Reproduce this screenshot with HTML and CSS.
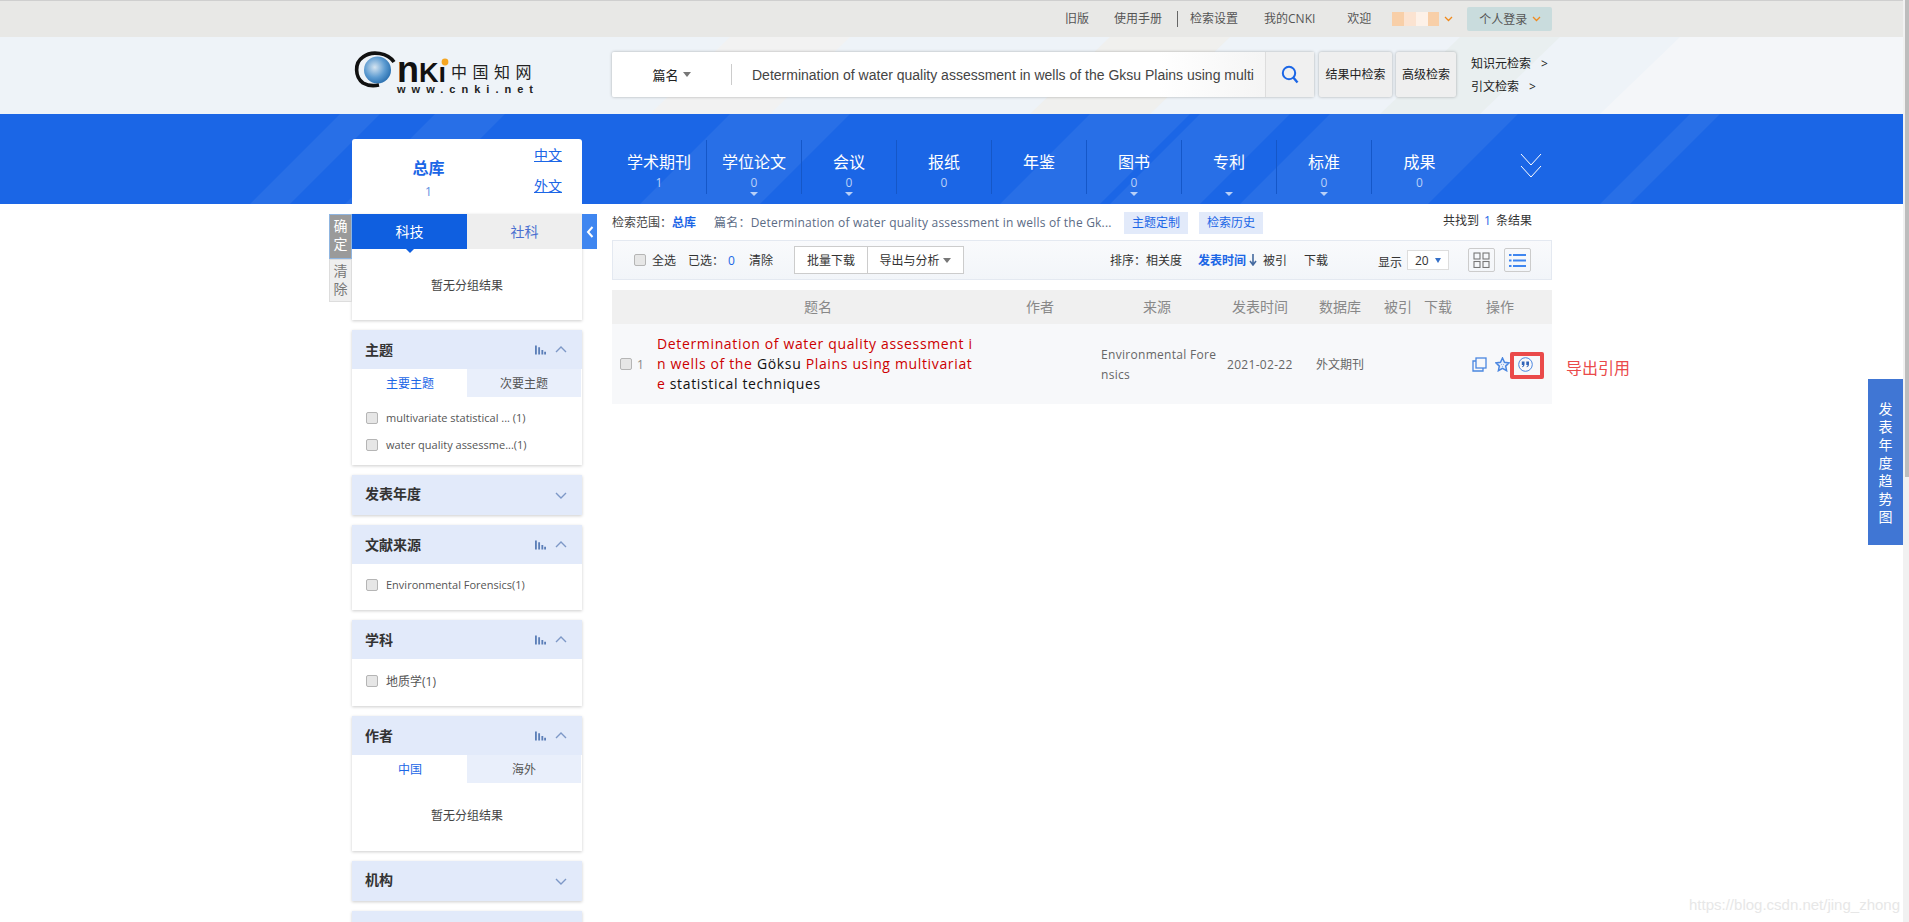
FILE: index.html
```html
<!DOCTYPE html>
<html lang="zh-CN">
<head>
  <meta charset="UTF-8">
  <title>检索结果 - 中国知网</title>
  <link rel="stylesheet" href="styles.css">
</head>
<body>
<div class="page">
  <div class="topbar">
    <div class="wrap topbar-in">
      <a class="top-link">旧版</a>
      <a class="top-link top-manual">使用手册</a>
      <span class="top-sep"></span>
      <a class="top-link top-setting">检索设置</a>
      <a class="top-link top-my">我的CNKI</a>
      <a class="top-link top-hello">欢迎</a>
      <span class="blur-name"><i></i><i></i><i></i><i></i></span>
      <svg class="mini-chev" width="9" height="6" viewBox="0 0 9 6"><path d="M1 1l3.5 3.5L8 1" fill="none" stroke="#f08a1d" stroke-width="1.3"/></svg>
      <div class="login">个人登录
        <svg class="mini-chev-in" width="9" height="6" viewBox="0 0 9 6"><path d="M1 1l3.5 3.5L8 1" fill="none" stroke="#f08a1d" stroke-width="1.3"/></svg>
      </div>
    </div>
  </div>

  <header class="head">
    <svg class="decor" width="1904" height="77" viewBox="0 0 1904 77">
      <polygon points="650,77 730,0 850,0 770,77" fill="#f2f2f2"/>
      <polygon points="1030,77 1110,0 1230,0 1150,77" fill="#f0f0ee"/>
      <polygon points="1380,77 1460,0 1560,0 1480,77" fill="#e9eff0"/>
      <polygon points="1600,77 1680,0 1904,0 1904,77" fill="#f4f6f9"/>
    </svg>
    <div class="wrap head-in">
      <svg class="logo" width="190" height="50" viewBox="0 0 190 50">
        <defs>
          <radialGradient id="globe" cx="0.4" cy="0.4" r="0.7">
            <stop offset="0" stop-color="#d5e4f0"/>
            <stop offset="0.55" stop-color="#5c9bd1"/>
            <stop offset="1" stop-color="#1f66a8"/>
          </radialGradient>
        </defs>
        <circle cx="25.500" cy="21" r="13.500" fill="url(#globe)"/>
        <path d="M42 13C36 4 20 1 11 8 2 14 3 28 11 34c5 3 11 3 16 2" fill="none" stroke="#111" stroke-width="3.600"/>
        <text class="logo-n" x="45" y="33">n</text>
        <text class="logo-k" x="67" y="33">Kı</text>
        <circle cx="93" cy="13" r="3.400" fill="#f5a623"/>
        <text class="logo-cn" x="99" y="29">中国知网</text>
        <text class="logo-url" x="45" y="44" textLength="136">www.cnki.net</text>
      </svg>

      <div class="search">
        <div class="search-type">篇名<i class="tri-down"></i></div>
        <div class="search-text">Determination of water quality assessment in wells of the Gksu Plains using multi</div>
        <div class="search-btn">
          <svg width="18" height="20" viewBox="0 0 18 20"><circle cx="8" cy="8" r="6.200" fill="none" stroke="#1b66e6" stroke-width="2"/><path d="M12.500 12.800L16.500 17.500" stroke="#1b66e6" stroke-width="2.400"/></svg>
        </div>
      </div>
      <div class="head-btn head-btn-a">结果中检索</div>
      <div class="head-btn head-btn-b">高级检索</div>
      <div class="head-links">
        <a>知识元检索<span class="gt">&gt;</span></a>
        <a>引文检索<span class="gt">&gt;</span></a>
      </div>
    </div>
  </header>

  <div class="band">
    <svg class="decor" width="1904" height="90" viewBox="0 0 1904 90">
      <g fill="#fff" fill-opacity="0.06">
        <polygon points="250,90 340,0 380,0 290,90"/>
        <polygon points="345,90 435,0 505,0 415,90"/>
        <polygon points="640,90 730,0 850,0 760,90"/>
        <circle cx="845" cy="180" r="66"/>
        <polygon points="1000,90 1090,0 1190,0 1100,90"/>
        <polygon points="1110,90 1200,0 1290,0 1200,90"/>
        <polygon points="1240,90 1330,0 1518,0 1428,90"/>
        <polygon points="1600,90 1690,0 1720,0 1630,90"/>
      </g>
    </svg>
    <div class="wrap band-in">
      <div class="db-main">
        <div class="db-total">
          <strong>总库</strong>
          <span>1</span>
        </div>
        <div class="db-lang">
          <a>中文</a>
          <a>外文</a>
        </div>
      </div>
      <nav class="db-nav">
        <div class="db-item"><b>学术期刊</b><span>1</span></div>
        <div class="db-item"><b>学位论文</b><span>0</span><i class="db-tri"></i></div>
        <div class="db-item"><b>会议</b><span>0</span><i class="db-tri"></i></div>
        <div class="db-item"><b>报纸</b><span>0</span></div>
        <div class="db-item"><b>年鉴</b></div>
        <div class="db-item"><b>图书</b><span>0</span><i class="db-tri"></i></div>
        <div class="db-item"><b>专利</b><i class="db-tri"></i></div>
        <div class="db-item"><b>标准</b><span>0</span><i class="db-tri"></i></div>
        <div class="db-item db-last"><b>成果</b><span>0</span></div>
      </nav>
      <svg class="db-more" width="24" height="26" viewBox="0 0 24 26"><path d="M2 1l10 11L22 1M2 13l10 11 10-11" fill="none" stroke="#fff" stroke-width="1"/></svg>
    </div>
  </div>

  <div class="wrap content">
    <aside class="side">
      <div class="side-actions">
        <div class="act act-ok">确定</div>
        <div class="act act-clear">清除</div>
      </div>
      <div class="side-toggle">
        <svg width="8" height="12" viewBox="0 0 8 12"><path d="M6.500 1L2 6l4.500 5" fill="none" stroke="#fff" stroke-width="2"/></svg>
      </div>

      <section class="card">
        <div class="big-tabs">
          <div class="big-tab on">科技</div>
          <div class="big-tab">社科</div>
        </div>
        <div class="empty empty-first">暂无分组结果</div>
      </section>

      <section class="card">
        <div class="g-head">
          <h3>主题</h3>
          <svg class="bars" width="11" height="10" viewBox="0 0 12 10"><path d="M0 0h2v10H0zM3.500 2h2v8h-2zM7 5h2v5H7zM10 7h2v3h-2z" fill="#5c7fb8"/></svg>
          <svg class="chev" width="12" height="7" viewBox="0 0 12 7"><path d="M1 6l5-5 5 5" fill="none" stroke="#7d98c7" stroke-width="1.400"/></svg>
        </div>
        <div class="g-tabs">
          <div class="g-tab on">主要主题</div>
          <div class="g-tab">次要主题</div>
        </div>
        <ul class="g-list">
          <li><input class="cb" type="checkbox">multivariate statistical ... (1)</li>
          <li><input class="cb" type="checkbox">water quality assessme...(1)</li>
        </ul>
      </section>

      <section class="card">
        <div class="g-head g-closed">
          <h3>发表年度</h3>
          <svg class="chev" width="12" height="7" viewBox="0 0 12 7"><path d="M1 1l5 5 5-5" fill="none" stroke="#7d98c7" stroke-width="1.400"/></svg>
        </div>
      </section>

      <section class="card">
        <div class="g-head">
          <h3>文献来源</h3>
          <svg class="bars" width="11" height="10" viewBox="0 0 12 10"><path d="M0 0h2v10H0zM3.500 2h2v8h-2zM7 5h2v5H7zM10 7h2v3h-2z" fill="#5c7fb8"/></svg>
          <svg class="chev" width="12" height="7" viewBox="0 0 12 7"><path d="M1 6l5-5 5 5" fill="none" stroke="#7d98c7" stroke-width="1.400"/></svg>
        </div>
        <ul class="g-list g-list-one">
          <li><input class="cb" type="checkbox">Environmental Forensics(1)</li>
        </ul>
      </section>

      <section class="card">
        <div class="g-head">
          <h3>学科</h3>
          <svg class="bars" width="11" height="10" viewBox="0 0 12 10"><path d="M0 0h2v10H0zM3.500 2h2v8h-2zM7 5h2v5H7zM10 7h2v3h-2z" fill="#5c7fb8"/></svg>
          <svg class="chev" width="12" height="7" viewBox="0 0 12 7"><path d="M1 6l5-5 5 5" fill="none" stroke="#7d98c7" stroke-width="1.400"/></svg>
        </div>
        <ul class="g-list g-list-two">
          <li><input class="cb" type="checkbox">地质学(1)</li>
        </ul>
      </section>

      <section class="card">
        <div class="g-head">
          <h3>作者</h3>
          <svg class="bars" width="11" height="10" viewBox="0 0 12 10"><path d="M0 0h2v10H0zM3.500 2h2v8h-2zM7 5h2v5H7zM10 7h2v3h-2z" fill="#5c7fb8"/></svg>
          <svg class="chev" width="12" height="7" viewBox="0 0 12 7"><path d="M1 6l5-5 5 5" fill="none" stroke="#7d98c7" stroke-width="1.400"/></svg>
        </div>
        <div class="g-tabs">
          <div class="g-tab on">中国</div>
          <div class="g-tab">海外</div>
        </div>
        <div class="empty">暂无分组结果</div>
      </section>

      <section class="card">
        <div class="g-head g-closed">
          <h3>机构</h3>
          <svg class="chev" width="12" height="7" viewBox="0 0 12 7"><path d="M1 1l5 5 5-5" fill="none" stroke="#7d98c7" stroke-width="1.400"/></svg>
        </div>
      </section>

      <section class="card">
        <div class="g-head g-closed"></div>
      </section>
    </aside>

    <main class="main">
      <div class="scope">
        <span class="scope-label">检索范围：<b>总库</b></span>
        <span class="scope-query">篇名：Determination of water quality assessment in wells of the Gk...</span>
        <a class="scope-tag scope-tag-a">主题定制</a>
        <a class="scope-tag scope-tag-b">检索历史</a>
        <span class="scope-count">共找到 <em>1</em> 条结果</span>
      </div>

      <div class="toolbar">
        <input class="cb tb-cb" type="checkbox">
        <span class="tb-all">全选</span>
        <span class="tb-sel">已选：</span><em class="tb-num">0</em>
        <span class="tb-clear">清除</span>
        <div class="tb-btns">
          <div class="tb-btn tb-dl">批量下载</div>
          <div class="tb-btn tb-ex">导出与分析<i class="tri-down"></i></div>
        </div>
        <div class="tb-right">
          <span>排序：</span><span>相关度</span>
          <span class="sort-on">发表时间<svg width="8" height="12" viewBox="0 0 8 12"><path d="M4 0v10M1 7l3 4 3-4" fill="none" stroke="#44699f" stroke-width="1.600"/></svg></span>
          <span class="sort-cite">被引</span>
          <span class="sort-dl">下载</span>
          <span class="show-label">显示</span>
          <div class="show-sel">20<i class="tri-blue"></i></div>
          <div class="view-btn view-grid">
            <svg width="17" height="16" viewBox="0 0 17 16"><g fill="none" stroke="#777" stroke-width="1.100"><rect x="1" y="1" width="6" height="6"/><rect x="10" y="1" width="6" height="6"/><rect x="1" y="9.500" width="6" height="6"/><rect x="10" y="9.500" width="6" height="6"/></g></svg>
          </div>
          <div class="view-btn view-list">
            <svg width="17" height="15" viewBox="0 0 17 15"><path d="M0 1h2.500v2H0zM4 1h13v2H4zM0 6.500h2.500v2H0zM4 6.500h13v2H4zM0 12h2.500v2H0zM4 12h13v2H4z" fill="#3f86f0"/></svg>
          </div>
        </div>
      </div>

      <div class="t-grid t-head">
        <div></div><div>题名</div><div>作者</div><div>来源</div><div>发表时间</div><div>数据库</div><div>被引</div><div>下载</div><div class="t-ops-h">操作</div>
      </div>
      <div class="t-grid t-row">
        <div class="t-num"><input class="cb" type="checkbox"><span>1</span></div>
        <div class="t-title"><span class="hl">Determination of water quality assessment in wells of the</span> Göksu <span class="hl">Plains using multivariate</span> statistical techniques</div>
        <div></div>
        <div class="t-src">Environmental Forensics</div>
        <div class="t-date">2021-02-22</div>
        <div class="t-db">外文期刊</div>
        <div></div>
        <div></div>
        <div class="t-ops">
          <svg width="15" height="15" viewBox="0 0 15 15"><g fill="none" stroke="#4a86e0" stroke-width="1.300"><rect x="4" y="1" width="10" height="10"/><path d="M4 4H1v10h10v-3"/></g></svg>
          <svg class="op-star" width="15" height="15" viewBox="0 0 15 15"><path d="M7.500 1l2 4.300 4.600.6-3.400 3.200.9 4.600-4.100-2.300-4.100 2.300.9-4.600L.9 5.900l4.600-.6z" fill="#e4edfb" stroke="#4a86e0" stroke-width="1.500"/><path d="M6 7h1v1H6zM8 7h1v1H8zM7 9h1v1H7z" fill="#8fb2e8"/></svg>
          <svg class="op-quote" width="15" height="15" viewBox="0 0 15 15"><circle cx="7.500" cy="7.500" r="6.800" fill="none" stroke="#4a86e0" stroke-width="1"/><path d="M3.800 4.500h2.700v2.700c0 1.500-.8 2.500-2.200 3.100l-.4-.6c.8-.4 1.200-1 1.300-1.700H3.800zM8.300 4.500H11v2.700c0 1.500-.8 2.500-2.200 3.100l-.4-.6c.8-.4 1.200-1 1.300-1.700H8.300z" fill="#2f63b8"/></svg>
        </div>
        <div class="mark-box"></div>
        <div class="mark-text">导出引用</div>
      </div>
    </main>
  </div>

  <div class="trend">发表年度趋势图</div>
  <div class="watermark">https://blog.csdn.net/jing_zhong</div>
  <div class="scroll"><div class="scroll-thumb"></div></div>
</div>
</body>
</html>
```

FILE: styles.css
```css
* {
  box-sizing: border-box;
}
html, body {
  margin: 0;
  padding: 0;
  background: #fff;
}
body {
  font-family: "Open Sans", "Noto Sans CJK SC", sans-serif;
  font-size: 12px;
  color: #333;
}
em, i {
  font-style: normal;
}
h3, ul {
  margin: 0;
  padding: 0;
}
.page {
  position: relative;
  width: 1909px;
  height: 922px;
  overflow: hidden;
  padding-right: 5px;
}
.wrap {
  width: 1200px;
  margin: 0 auto;
}
.decor {
  position: absolute;
  left: 0;
  top: 0;
}

/* top bar */
.topbar {
  height: 37px;
  background: #e8e8e6;
  border-top: 1px solid #cfcfcf;
}
.topbar-in {
  height: 36px;
  display: flex;
  align-items: center;
  padding-left: 713px;
  color: #555;
  white-space: nowrap;
}
.topbar-in > * {
  flex: none;
}
.top-link {
  font-size: 12px;
  line-height: 36px;
}
.top-manual { margin-left: 25px; }
.top-sep {
  width: 1px;
  height: 16px;
  background: #666;
  margin-left: 15px;
}
.top-setting { margin-left: 12px; }
.top-my { margin-left: 26px; }
.top-hello { margin-left: 32px; }
.blur-name {
  display: flex;
  width: 47px;
  height: 14px;
  margin-left: 21px;
  background: #fbeadd;
}
.blur-name i {
  width: 12px;
  height: 14px;
  background: #f8cfa8;
}
.blur-name i:nth-child(2) { background: #fbe3d1; }
.blur-name i:nth-child(3) { background: #fdf1e8; }
.mini-chev { margin-left: 5px; }
.login {
  display: flex;
  align-items: center;
  width: 85px;
  height: 24px;
  margin-left: 14px;
  padding-left: 12px;
  background: #c9dcdd;
  border-radius: 2px;
}
.mini-chev-in { margin-left: 5px; }

/* search header */
.head {
  position: relative;
  height: 77px;
  background: #eef3f8;
}
.head-in {
  position: relative;
  height: 77px;
  display: flex;
  align-items: flex-start;
}
.logo {
  margin-top: 12px;
  flex: none;
}
.logo-n {
  font-family: "Liberation Sans", sans-serif;
  font-size: 36px;
  font-weight: bold;
  fill: #111;
}
.logo-k {
  font-family: "Liberation Sans", sans-serif;
  font-size: 27px;
  font-weight: bold;
  fill: #111;
}
.logo-cn {
  font-family: "Noto Sans CJK SC", sans-serif;
  font-size: 16px;
  letter-spacing: 5.500px;
  fill: #222;
}
.logo-url {
  font-family: "Liberation Sans", sans-serif;
  font-size: 11px;
  font-weight: bold;
  fill: #222;
}
.search {
  display: flex;
  align-items: center;
  width: 702px;
  height: 45px;
  margin-top: 15px;
  margin-left: 70px;
  background: linear-gradient(90deg, #fff 0, #fff 78%, #f0f0f0 100%);
  border-radius: 2px;
  box-shadow: 0 0 3px rgba(0, 0, 0, .3);
}
.search-type {
  display: flex;
  align-items: center;
  justify-content: center;
  width: 120px;
  height: 21px;
  flex: none;
  font-size: 13px;
  color: #222;
  border-right: 1px solid #ccc;
}
.tri-down {
  display: inline-block;
  width: 0;
  height: 0;
  margin-left: 4px;
  border-left: 4px solid transparent;
  border-right: 4px solid transparent;
  border-top: 5px solid #777;
}
.search-text {
  flex: 1;
  overflow: hidden;
  white-space: nowrap;
  padding-left: 20px;
  font-family: "Liberation Sans", sans-serif;
  font-size: 14px;
  color: #444;
}
.search-btn {
  display: flex;
  align-items: center;
  justify-content: center;
  flex: none;
  width: 49px;
  height: 45px;
  background: #f0f0f0;
  border-left: 1px solid #ddd;
}
.head-btn {
  height: 45px;
  margin-top: 15px;
  line-height: 45px;
  text-align: center;
  font-size: 12px;
  color: #222;
  background: #efefef;
  border-radius: 2px;
  box-shadow: 0 0 3px rgba(0, 0, 0, .3);
}
.head-btn-a { width: 73px; margin-left: 5px; }
.head-btn-b { width: 60px; margin-left: 4px; }
.head-links {
  display: flex;
  flex-direction: column;
  margin-top: 15px;
  margin-left: 15px;
  color: #222;
}
.head-links a {
  height: 23px;
  line-height: 23px;
}
.gt { margin-left: 10px; }

/* blue band */
.band {
  position: relative;
  height: 90px;
  background: #1b66e6;
}
.band-in {
  position: relative;
  height: 90px;
  display: flex;
}
.db-main {
  display: flex;
  width: 230px;
  height: 65px;
  margin-top: 25px;
  flex: none;
  background: #fff;
  border-radius: 3px 3px 0 0;
}
.db-total {
  width: 153px;
  text-align: center;
  padding-top: 18px;
}
.db-total strong {
  display: block;
  font-size: 16px;
  line-height: 22px;
  color: #1b66e6;
}
.db-total span {
  display: block;
  margin-top: 5px;
  font-size: 12px;
  line-height: 16px;
  color: #5f8fe0;
}
.db-lang {
  display: flex;
  flex-direction: column;
  padding-top: 5px;
  margin-left: 29px;
}
.db-lang a {
  height: 32px;
  line-height: 22px;
  font-size: 14px;
  color: #1b66e6;
  text-decoration: underline;
}
.db-lang a + a { margin-top: 1px; }
.db-nav {
  display: flex;
  margin-left: 30px;
  margin-top: 26px;
}
.db-item {
  position: relative;
  width: 95px;
  height: 54px;
  padding-top: 11px;
  text-align: center;
  border-right: 1px solid #1557c8;
}
.db-last { border-right: none; }
.db-item b {
  display: block;
  font-weight: normal;
  font-size: 16px;
  line-height: 22px;
  color: #fff;
}
.db-item span {
  display: block;
  margin-top: 2px;
  font-size: 12px;
  line-height: 16px;
  color: #b9d0f7;
}
.db-tri {
  position: absolute;
  left: 43px;
  top: 52px;
  width: 0;
  height: 0;
  border-left: 4px solid transparent;
  border-right: 4px solid transparent;
  border-top: 4px solid #b9d0f7;
}
.db-more {
  margin-left: 52px;
  margin-top: 39px;
}

/* content */
.content {
  display: flex;
}
.side {
  position: relative;
  width: 230px;
  flex: none;
  padding-top: 10px;
}
.side-actions {
  position: absolute;
  left: -23px;
  top: 10px;
  width: 23px;
}
.act {
  padding: 2px 0;
  text-align: center;
  font-size: 14px;
  line-height: 18px;
}
.act-ok {
  height: 45px;
  color: #fff;
  background: #9a9a9a;
  border: 1px solid #8fb5e0;
}
.act-clear {
  height: 43px;
  color: #777;
  background: #efefef;
  border: 1px solid #ddd;
}
.side-toggle {
  position: absolute;
  right: -15px;
  top: 10px;
  display: flex;
  align-items: center;
  justify-content: center;
  width: 15px;
  height: 35px;
  background: #3f86f0;
}
.card {
  margin-bottom: 10px;
  background: #fff;
  box-shadow: 0 1px 3px rgba(0, 0, 0, .2);
}
.big-tabs {
  display: flex;
  height: 35px;
}
.big-tab {
  position: relative;
  width: 115px;
  line-height: 35px;
  text-align: center;
  font-size: 14px;
  color: #4a6fd0;
  background: #eeeeee;
}
.big-tab.on {
  color: #fff;
  background: #0f5fe0;
}
.big-tab.on::after {
  content: "";
  position: absolute;
  left: 50%;
  bottom: -4px;
  margin-left: -4px;
  border-left: 4px solid transparent;
  border-right: 4px solid transparent;
  border-top: 4px solid #0f5fe0;
}
.empty {
  height: 68px;
  line-height: 65px;
  text-align: center;
  font-size: 12px;
  color: #444;
}
.empty-first {
  height: 71px;
  line-height: 74px;
}
.g-head {
  display: flex;
  align-items: center;
  height: 39px;
  padding: 0 15px 0 13px;
  background: #e2eafa;
}
.g-closed { height: 40px; }
.g-closed h3 { margin-top: -2px; }
.g-head h3 {
  flex: 1;
  font-size: 14px;
  line-height: 20px;
  color: #333;
}
.bars { margin-right: 9px; }
.g-tabs {
  display: flex;
  height: 28px;
  padding: 0 1px;
}
.g-tab {
  width: 114px;
  line-height: 30px;
  text-align: center;
  font-size: 12px;
  color: #555;
  background: #e9effb;
}
.g-tab.on {
  color: #1b66e6;
  background: #fff;
}
.g-list {
  list-style: none;
  padding: 7px 0 7px 14px;
  font-size: 11px;
  color: #555;
}
.g-list li {
  display: flex;
  align-items: center;
  height: 27px;
}
.g-list-one { height: 46px; }
.g-list-two { padding-top: 8px; height: 47px; font-size: 12px; }
.g-list .cb { margin-right: 8px; }
.cb {
  appearance: none;
  display: block;
  flex: none;
  width: 12px;
  height: 12px;
  margin: 0 9px 0 0;
  background: #e6e6e6;
  border: 1px solid #b5b5b5;
  border-radius: 2px;
}

/* results */
.main {
  width: 940px;
  margin-left: 30px;
  flex: none;
}
.scope {
  display: flex;
  align-items: center;
  height: 36px;
  font-size: 12px;
}
.scope-label { color: #444; }
.scope-label b { color: #1b66e6; }
.scope-query {
  flex: none;
  width: 410px;
  margin-left: 18px;
  white-space: nowrap;
  overflow: hidden;
  color: #5b6b85;
  letter-spacing: .2px;
}
.scope-tag {
  height: 22px;
  margin-top: 2px;
  line-height: 22px;
  text-align: center;
  color: #1b66e6;
  background: #e2eafa;
}
.scope-tag-a { width: 64px; }
.scope-tag-b { width: 64px; margin-left: 11px; }
.scope-count {
  margin-left: auto;
  margin-top: -4px;
  margin-right: 20px;
}
.scope-count em {
  margin: 0 2px;
  color: #1b66e6;
}
.toolbar {
  display: flex;
  align-items: center;
  height: 40px;
  padding-left: 21px;
  background: linear-gradient(180deg, #f9fafc, #f2f5f9);
  border: 1px solid #e4e9f1;
}
.tb-cb { margin-right: 6px; }
.tb-sel { margin-left: 12px; }
.tb-num { margin-left: 4px; color: #1b66e6; }
.tb-clear { margin-left: 14px; }
.tb-btns {
  display: flex;
  height: 28px;
  margin-left: 21px;
  background: #fff;
}
.tb-btn {
  display: flex;
  align-items: center;
  justify-content: center;
  height: 28px;
  font-size: 12px;
  border: 1px solid #ccc;
}
.tb-dl { width: 74px; }
.tb-ex { width: 96px; border-left: none; }
.tb-right {
  display: flex;
  align-items: center;
  margin-left: auto;
  padding-right: 20px;
}
.sort-on {
  display: flex;
  align-items: center;
  margin-left: 16px;
  color: #1b66e6;
  font-weight: bold;
}
.sort-on svg { margin-left: 3px; }
.sort-cite { margin-left: 6px; }
.sort-dl { margin-left: 17px; }
.show-label {
  margin-left: 50px;
  margin-top: 3px;
}
.show-sel {
  display: flex;
  align-items: center;
  width: 42px;
  height: 20px;
  margin-left: 5px;
  padding-left: 7px;
  background: #fff;
  border: 1px solid #ddd;
}
.tri-blue {
  margin-left: 6px;
  border-left: 3px solid transparent;
  border-right: 3px solid transparent;
  border-top: 5px solid #3570c8;
}
.view-btn {
  display: flex;
  align-items: center;
  justify-content: center;
  width: 27px;
  height: 24px;
  border: 1px solid #ccc;
  border-radius: 2px;
}
.view-grid { margin-left: 19px; }
.view-list { margin-left: 9px; }
.t-grid {
  position: relative;
  display: grid;
  grid-template-columns: 45px 322px 122px 112px 94px 66px 50px 30px 99px;
}
.t-head {
  height: 34px;
  margin-top: 10px;
  line-height: 33px;
  text-align: center;
  font-size: 14px;
  color: #888;
  background: #f0f0f0;
}
.t-ops-h { padding-right: 5px; }
.t-row {
  height: 80px;
  align-items: center;
  color: #666;
  background: #f7f8fa;
}
.t-num {
  display: flex;
  align-items: center;
  padding-left: 8px;
  color: #888;
}
.t-num .cb { margin-right: 5px; }
.t-title {
  width: 320px;
  font-size: 14px;
  line-height: 20px;
  letter-spacing: .65px;
  word-break: break-all;
  color: #111;
}
.hl { color: #c00; }
.t-src {
  width: 118px;
  padding-top: 2px;
  font-size: 12px;
  line-height: 20px;
  letter-spacing: .3px;
  word-break: break-all;
}
.t-date {
  padding-left: 14px;
  letter-spacing: .3px;
}
.t-db { padding-left: 9px; }
.t-ops {
  display: flex;
  align-items: center;
  padding-left: 19px;
}
.op-star { margin-left: 8px; }
.op-quote { margin-left: 8px; }
.mark-box {
  position: absolute;
  left: 898px;
  top: 28px;
  width: 34px;
  height: 27px;
  border: 4px solid #ea4a4a;
  border-radius: 2px;
}
.mark-text {
  position: absolute;
  left: 954px;
  top: 33px;
  width: 70px;
  font-size: 16px;
  line-height: 22px;
  color: #ea4a4a;
}

/* overlays */
.trend {
  position: absolute;
  left: 1868px;
  top: 379px;
  width: 35px;
  height: 166px;
  padding: 21px 10px 0;
  font-size: 14px;
  line-height: 18px;
  color: #fff;
  background: #4076d4;
  text-align: center;
}
.watermark {
  position: absolute;
  right: 9px;
  top: 896px;
  font-family: "Liberation Sans", sans-serif;
  font-size: 15px;
  line-height: 18px;
  color: #e7e7e7;
}
.scroll {
  position: absolute;
  right: 0;
  top: 0;
  bottom: 0;
  width: 6px;
  padding-left: 2px;
  background: #f1f1f1;
}
.scroll-thumb {
  height: 477px;
  background: #bdbdbd;
}
```
